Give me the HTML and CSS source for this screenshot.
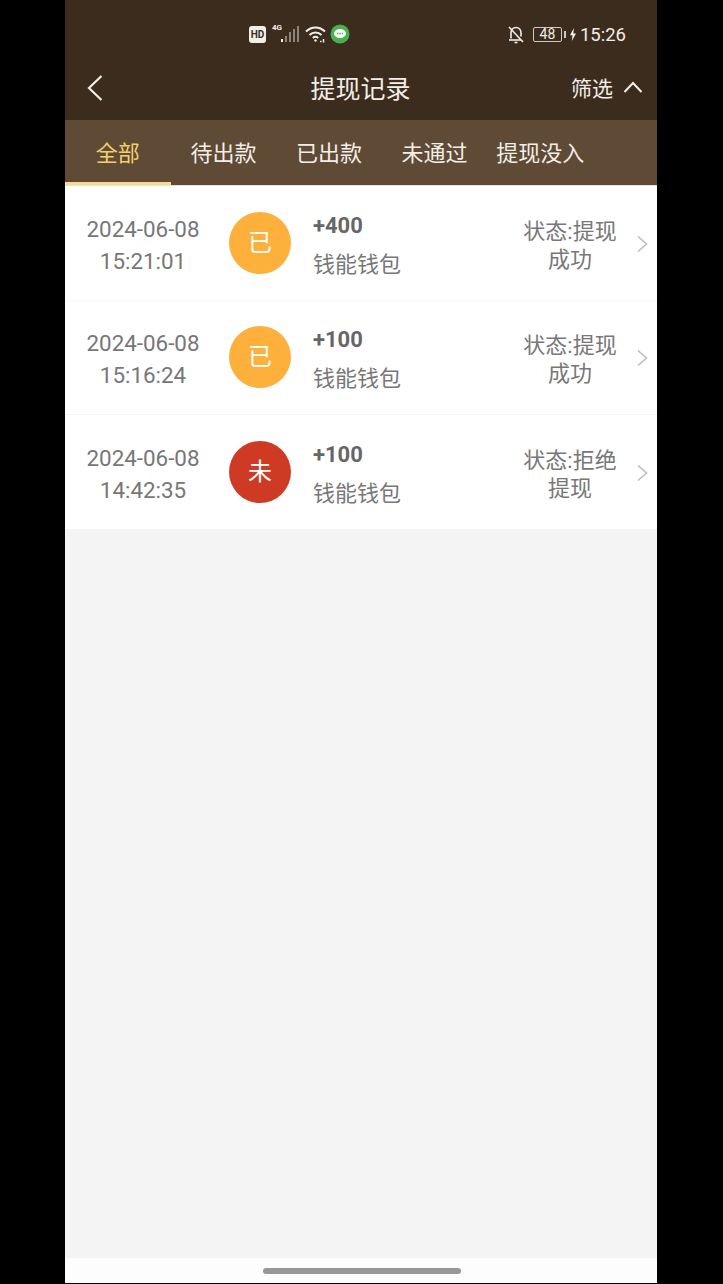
FILE: index.html
```html
<!DOCTYPE html>
<html lang="zh-CN">
<head>
    <meta charset="UTF-8">
    <meta name="viewport" content="width=device-width, initial-scale=1.0">
    <title>提现记录</title>
    <link rel="stylesheet" href="styles.css">
</head>
<body>
    <div class="phone">
        <header class="top">
            <div class="status-bar">
                <div class="status-mid">
                    <span class="hd">HD</span>
                    <div class="signal">
                        <span class="net">4G</span>
                        <svg width="19" height="18" viewBox="0 0 19 18">
                            <rect x="0" y="14" width="2" height="3" fill="#f2eee8"/>
                            <rect x="4" y="11" width="2" height="6" fill="#8d8479"/>
                            <rect x="8" y="7" width="2" height="10" fill="#8d8479"/>
                            <rect x="12" y="4" width="2" height="13" fill="#8d8479"/>
                            <rect x="16" y="1" width="2" height="16" fill="#8d8479"/>
                        </svg>
                    </div>
                    <svg class="wifi" width="22" height="18" viewBox="0 0 22 18" fill="none" stroke="#f2eee8" stroke-width="2">
                        <path d="M1 6.500C6.500 1 14.500 1 20 6.500"/>
                        <path d="M4.500 10C8 6.500 13 6.500 16.500 10"/>
                        <path d="M7.800 13C9.500 11.500 11.500 11.500 13.200 13"/>
                        <circle cx="10.500" cy="15.500" r="1.200" fill="#f2eee8" stroke="none"/>
                        <path d="M15 16.500h1.500M18.500 14v3.500" stroke-width="1.500"/>
                    </svg>
                    <svg width="20" height="20" viewBox="0 0 20 20">
                        <circle cx="10" cy="10" r="9.500" fill="#4caf50"/>
                        <ellipse cx="10" cy="9.500" rx="6" ry="4.500" fill="#f4fbf2"/>
                        <path d="M7 9.500h6" stroke="#4caf50" stroke-width="1.400" stroke-dasharray="1.400 1"/>
                    </svg>
                </div>
                <div class="status-right">
                    <svg width="18" height="19" viewBox="0 0 18 19" fill="none" stroke="#f2eee8" stroke-width="1.600">
                        <path d="M4 13.500V8c0-3 2-5.500 5-5.500S14 5 14 8v3.500"/>
                        <path d="M2 15h12"/>
                        <path d="M7.500 17.500h3"/>
                        <path d="M2 2l14 15"/>
                    </svg>
                    <span class="battery">48</span>
                    <span class="battery-tip"></span>
                    <svg width="6" height="13" viewBox="0 0 6 13">
                        <path d="M3.800 0L0 7.200h2.400L1.800 13 6 5.400H3.400z" fill="#f2eee8"/>
                    </svg>
                    <span class="clock">15:26</span>
                </div>
            </div>
            <nav class="nav">
                <svg class="back" width="18" height="28" viewBox="0 0 18 28" fill="none" stroke="#f2eee8" stroke-width="2.200">
                    <path d="M15.500 2L3 14l12.500 12"/>
                </svg>
                <h1>提现记录</h1>
                <div class="filter">
                    <span>筛选</span>
                    <svg width="20" height="12" viewBox="0 0 20 12" fill="none" stroke="#f2eee8" stroke-width="2">
                        <path d="M1.500 11L10 2l8.500 9"/>
                    </svg>
                </div>
            </nav>
        </header>

        <div class="tabs">
            <div class="tab active">全部</div>
            <div class="tab">待出款</div>
            <div class="tab">已出款</div>
            <div class="tab">未通过</div>
            <div class="tab">提现没入</div>
        </div>

        <ul class="list">
            <li class="row">
                <div class="when">2024-06-08<br>15:21:01</div>
                <div class="mark done">已</div>
                <div class="info">
                    <div class="amount">+400</div>
                    <div class="wallet">钱能钱包</div>
                </div>
                <div class="state">状态:提现成功</div>
                <svg class="more" width="12" height="18" viewBox="0 0 12 18" fill="none" stroke="#bdbdbd" stroke-width="1.600">
                    <path d="M2 1.500L10.500 9 2 16.500"/>
                </svg>
            </li>
            <li class="row">
                <div class="when">2024-06-08<br>15:16:24</div>
                <div class="mark done">已</div>
                <div class="info">
                    <div class="amount">+100</div>
                    <div class="wallet">钱能钱包</div>
                </div>
                <div class="state">状态:提现成功</div>
                <svg class="more" width="12" height="18" viewBox="0 0 12 18" fill="none" stroke="#bdbdbd" stroke-width="1.600">
                    <path d="M2 1.500L10.500 9 2 16.500"/>
                </svg>
            </li>
            <li class="row">
                <div class="when">2024-06-08<br>14:42:35</div>
                <div class="mark refused">未</div>
                <div class="info">
                    <div class="amount">+100</div>
                    <div class="wallet">钱能钱包</div>
                </div>
                <div class="state">状态:拒绝提现</div>
                <svg class="more" width="12" height="18" viewBox="0 0 12 18" fill="none" stroke="#bdbdbd" stroke-width="1.600">
                    <path d="M2 1.500L10.500 9 2 16.500"/>
                </svg>
            </li>
        </ul>

        <div class="home-bar"><span></span></div>
    </div>
</body>
</html>
```

FILE: styles.css
```css
html, body {
    height: 100%;
}

body {
    margin: 0;
    background-color: #000;
    font-family: Roboto, "Noto Sans CJK SC", sans-serif;
    overflow: hidden;
}

.phone {
    width: 592px;
    height: 1283px;
    margin-left: 65px;
    display: flex;
    flex-direction: column;
    background-color: #f4f4f4;
}

/* status bar and title */
.top {
    background-color: #3c2c1d;
    color: #f2eee8;
}

.status-bar {
    height: 60px;
    box-sizing: border-box;
    padding: 8px 31px 0 184px;
    display: flex;
    align-items: center;
    justify-content: space-between;
}

.status-mid, .status-right {
    display: flex;
    align-items: center;
}

.hd {
    width: 17px;
    height: 17px;
    border-radius: 3px;
    background-color: #f2eee8;
    color: #3c2c1d;
    font-size: 10px;
    font-weight: 700;
    line-height: 17px;
    text-align: center;
}

.signal {
    display: flex;
    margin-left: 6px;
    position: relative;
    width: 28px;
    justify-content: flex-end;
}

.net {
    position: absolute;
    left: 0;
    top: -2px;
    font-size: 8px;
    font-weight: 700;
}

.wifi {
    margin-left: 5px;
}

.status-mid svg:last-child {
    margin-left: 3px;
}

.battery {
    width: 29px;
    height: 15px;
    margin-left: 8px;
    box-sizing: border-box;
    border: 1px solid #cfc9c0;
    border-radius: 2px;
    font-size: 14px;
    line-height: 13px;
    text-align: center;
}

.battery-tip {
    width: 2px;
    height: 7px;
    margin: 0 4px 0 2px;
    background-color: #cfc9c0;
}

.clock {
    margin-left: 4px;
    padding-top: 1px;
    font-size: 18.500px;
}

.nav {
    height: 60px;
    display: flex;
    align-items: center;
    justify-content: center;
    position: relative;
}

.nav h1 {
    margin: 0 0 6px -1px;
    font-size: 25px;
    font-weight: 400;
}

.back {
    position: absolute;
    left: 21px;
    top: 14px;
}

.filter {
    position: absolute;
    right: 14px;
    top: 12px;
    display: flex;
    align-items: center;
    gap: 10px;
    font-size: 21px;
}

/* tabs */
.tabs {
    height: 65px;
    display: flex;
    background-color: #5e4a35;
    border-bottom: 1px solid #e4e0da;
}

.tab {
    width: 105.600px;
    box-sizing: border-box;
    padding-top: 3px;
    color: #f2eee8;
    font-size: 22px;
    line-height: 62px;
    text-align: center;
    white-space: nowrap;
}

.tab.active {
    color: #f3d06f;
    border-bottom: 3px solid #f8dc8e;
}

/* withdrawal records */
.list {
    margin: 0;
    padding: 0;
    list-style: none;
    background-color: #fff;
}

.row {
    height: 114.500px;
    box-sizing: border-box;
    display: flex;
    align-items: center;
    padding-right: 9px;
    border-bottom: 1px solid #f6f6f6;
    color: #777;
    font-size: 22px;
}

.row:last-child {
    height: 113.500px;
    border-bottom: 0;
}

.when {
    width: 156px;
    padding-top: 4px;
    font-size: 22.400px;
    line-height: 32px;
    text-align: center;
    flex-shrink: 0;
}

.mark {
    width: 62px;
    height: 62px;
    margin-left: 8px;
    border-radius: 50%;
    color: #fff;
    font-size: 24px;
    line-height: 62px;
    text-align: center;
    flex-shrink: 0;
}

.mark.done {
    background-color: #fdb03b;
}

.mark.refused {
    background-color: #cf3a25;
}

.info {
    flex: 1;
    margin-left: 22px;
    padding-top: 5px;
}

.amount {
    margin-bottom: 11px;
    color: #666;
    font-weight: 700;
    line-height: 28px;
}

.wallet {
    line-height: 28px;
}

.state {
    width: 100px;
    padding-top: 6px;
    line-height: 28px;
    text-align: center;
}

.more {
    margin-left: 16px;
    margin-top: 2px;
    flex-shrink: 0;
}

/* gesture bar */
.home-bar {
    margin-top: auto;
    height: 25px;
    display: flex;
    align-items: center;
    justify-content: center;
    background-color: #fdfdfd;
}

.home-bar span {
    width: 198px;
    height: 6px;
    margin: 1px 0 0 1px;
    border-radius: 3px;
    background-color: #979797;
}
```
